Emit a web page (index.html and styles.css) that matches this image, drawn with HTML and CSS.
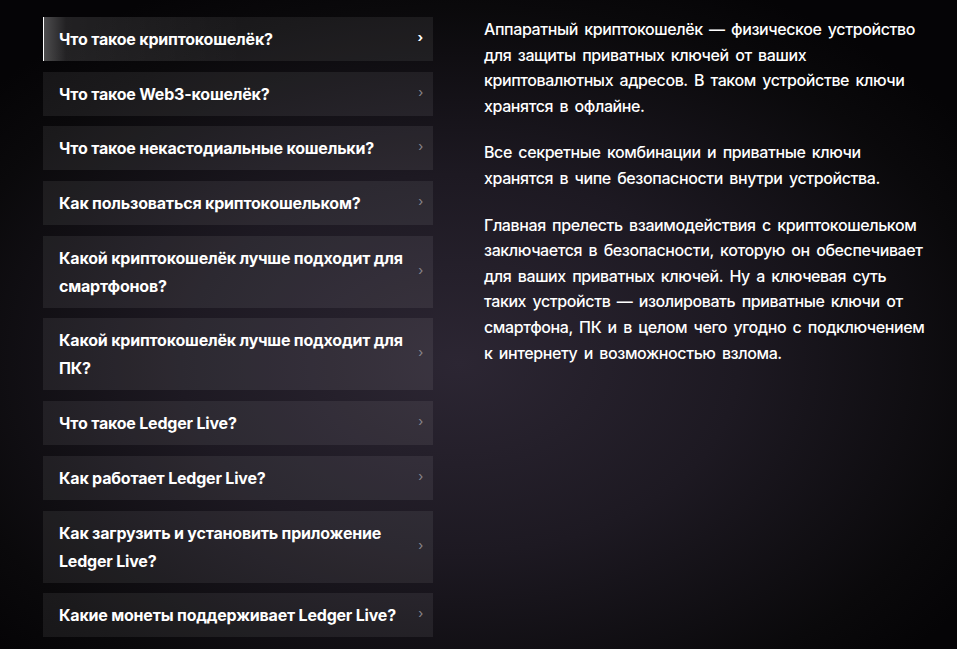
FILE: index.html
```html
<!DOCTYPE html>
<html lang="ru">
<head>
<meta charset="utf-8">
<title>FAQ</title>
<link rel="stylesheet" href="styles.css">
</head>
<body>
<div class="faq">
    <ul class="faq_list">
        <li class="faq_item faq_item_active"><span class="faq_q">Что такое криптокошелёк?</span><span class="faq_arrow">›</span></li>
        <li class="faq_item"><span class="faq_q">Что такое Web3-кошелёк?</span><span class="faq_arrow">›</span></li>
        <li class="faq_item"><span class="faq_q">Что такое некастодиальные кошельки?</span><span class="faq_arrow">›</span></li>
        <li class="faq_item"><span class="faq_q">Как пользоваться криптокошельком?</span><span class="faq_arrow">›</span></li>
        <li class="faq_item"><span class="faq_q">Какой криптокошелёк лучше подходит для смартфонов?</span><span class="faq_arrow">›</span></li>
        <li class="faq_item"><span class="faq_q">Какой криптокошелёк лучше подходит для ПК?</span><span class="faq_arrow">›</span></li>
        <li class="faq_item"><span class="faq_q">Что такое Ledger Live?</span><span class="faq_arrow">›</span></li>
        <li class="faq_item"><span class="faq_q">Как работает Ledger Live?</span><span class="faq_arrow">›</span></li>
        <li class="faq_item"><span class="faq_q">Как загрузить и установить приложение Ledger Live?</span><span class="faq_arrow">›</span></li>
        <li class="faq_item"><span class="faq_q">Какие монеты поддерживает Ledger Live?</span><span class="faq_arrow">›</span></li>
    </ul>
    <div class="faq_answer">
        <p>Аппаратный криптокошелёк — физическое устройство для защиты приватных ключей от ваших криптовалютных адресов. В таком устройстве ключи хранятся в офлайне.</p>
        <p>Все секретные комбинации и приватные ключи хранятся в чипе безопасности внутри устройства.</p>
        <p>Главная прелесть взаимодействия с криптокошельком заключается в безопасности, которую он обеспечивает для ваших приватных ключей. Ну а ключевая суть таких устройств — изолировать приватные ключи от смартфона, ПК и в целом чего угодно с подключением к интернету и возможностью взлома.</p>
    </div>
</div>
</body>
</html>
```

FILE: styles.css
```css
html, body
{
    margin: 0;
    height: 100%;
}
body
{
    font-family: Inter, "Noto Sans", sans-serif;
    color: #fff;
    background-color: #060507;
    background-image: radial-gradient(ellipse 620px 420px at 48% 56%, #2c2633 0%, #1d1922 45%, #0a090b 85%, #050406 100%);
    overflow: hidden;
}
.faq
{
    display: flex;
    align-items: flex-start;
    gap: 51px;
    padding: 17px 0 0 43px;
}
.faq_list
{
    list-style: none;
    margin: 0;
    padding: 0;
    width: 390px;
    display: flex;
    flex-direction: column;
    gap: 10.7px;
}
.faq_item
{
    display: flex;
    align-items: center;
    gap: 10px;
    padding: 8px 10px 8px 16px;
    background-color: rgba(255, 255, 255, 0.07);
    font-size: 16px;
    font-weight: 700;
    line-height: 28px;
    letter-spacing: -0.2px;
}
.faq_item_active
{
    border-left: 1px solid #fff;
    padding-left: 15px;
    background-image: linear-gradient(90deg, rgba(255,255,255,0.24) 0px, rgba(255,255,255,0.05) 22px, rgba(255,255,255,0) 200px);
}
.faq_q
{
    flex: 1;
}
.faq_arrow
{
    font-size: 13px;
    font-weight: 400;
    color: #8a878f;
    line-height: 1;
    margin-top: -3px;
}
.faq_item_active .faq_arrow
{
    color: #fff;
    font-weight: 700;
}
.faq_answer
{
    width: 442px;
    font-size: 16px;
    font-weight: 500;
    line-height: 25.6px;
    letter-spacing: -0.4px;
    word-spacing: 2.5px;
}
.faq_answer p
{
    margin: 0 0 21px;
}
```
